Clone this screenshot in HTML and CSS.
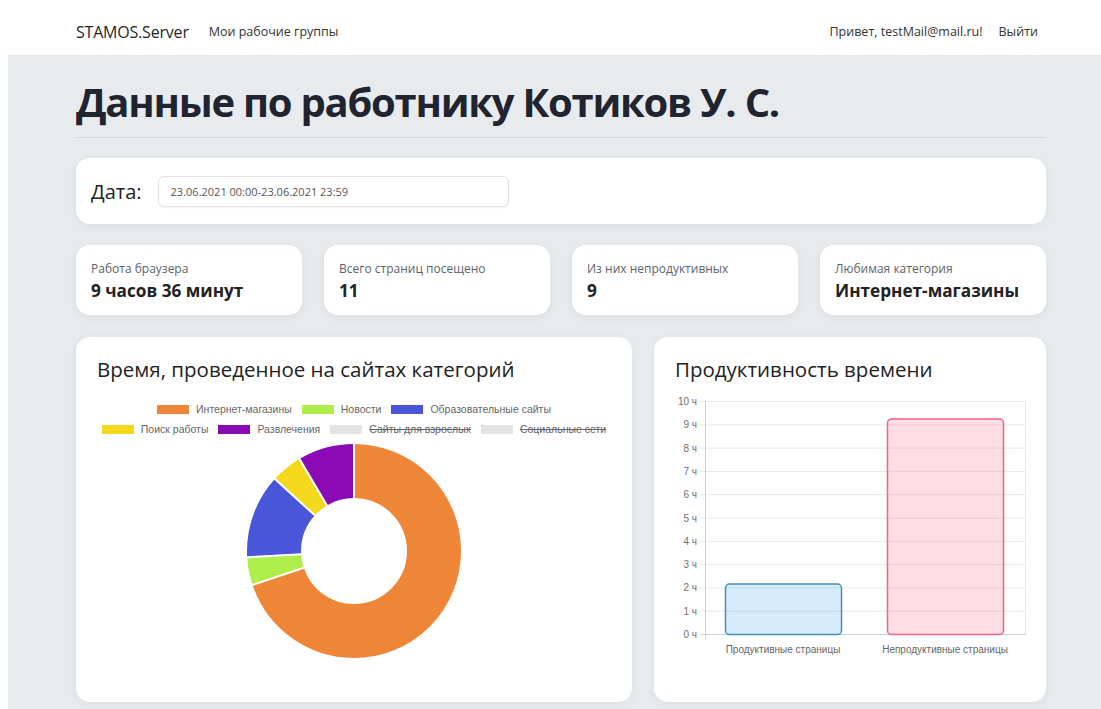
FILE: index.html
```html
<!DOCTYPE html>
<html lang="ru">
<head>
<meta charset="utf-8">
<title>STAMOS.Server — Данные по работнику</title>
<link rel="stylesheet" href="styles.css">
</head>
<body>
<nav class="topbar">
  <div class="topbar-inner">
    <a class="brand" href="#">STAMOS.Server</a>
    <a class="nav-link" href="#">Мои рабочие группы</a>
    <div class="spacer"></div>
    <span class="nav-text">Привет, testMail@mail.ru!</span>
    <a class="nav-link" href="#">Выйти</a>
  </div>
</nav>

<main class="page">
  <div class="container">
    <h1 class="title">Данные по работнику Котиков У. С.</h1>
    <hr class="divider">

    <section class="card date-card">
      <label class="date-label" for="range">Дата:</label>
      <input class="date-input" id="range" type="text" value="23.06.2021 00:00-23.06.2021 23:59">
    </section>

    <section class="stats">
      <div class="card stat">
        <div class="stat-label">Работа браузера</div>
        <div class="stat-value">9 часов 36 минут</div>
      </div>
      <div class="card stat">
        <div class="stat-label">Всего страниц посещено</div>
        <div class="stat-value">11</div>
      </div>
      <div class="card stat">
        <div class="stat-label">Из них непродуктивных</div>
        <div class="stat-value">9</div>
      </div>
      <div class="card stat">
        <div class="stat-label">Любимая категория</div>
        <div class="stat-value">Интернет-магазины</div>
      </div>
    </section>

    <section class="charts">
      <div class="card chart-card">
        <h2 class="chart-title">Время, проведенное на сайтах категорий</h2>
        <div class="legend">
          <div class="legend-row">
            <span class="legend-item"><i class="swatch sw-orange"></i>Интернет-магазины</span>
            <span class="legend-item"><i class="swatch sw-green"></i>Новости</span>
            <span class="legend-item"><i class="swatch sw-blue"></i>Образовательные сайты</span>
          </div>
          <div class="legend-row">
            <span class="legend-item"><i class="swatch sw-yellow"></i>Поиск работы</span>
            <span class="legend-item"><i class="swatch sw-purple"></i>Развлечения</span>
            <span class="legend-item off"><i class="swatch sw-off"></i>Сайты для взрослых</span>
            <span class="legend-item off"><i class="swatch sw-off"></i>Социальные сети</span>
          </div>
        </div>
        <div class="donut-wrap">
          <svg class="donut" width="216" height="216" viewBox="0 0 216 216">
            <g transform="translate(108 108) rotate(-90)" fill="none" stroke-width="54">
              <circle r="80" stroke="#ef8537" stroke-dasharray="351.16 502.65" stroke-dashoffset="0"/>
              <circle r="80" stroke="#aeee4a" stroke-dasharray="21.08 502.65" stroke-dashoffset="-351.16"/>
              <circle r="80" stroke="#4a56d9" stroke-dasharray="63.81 502.65" stroke-dashoffset="-372.24"/>
              <circle r="80" stroke="#f4d81c" stroke-dasharray="23.74 502.65" stroke-dashoffset="-436.05"/>
              <circle r="80" stroke="#8a0bb3" stroke-dasharray="42.86 502.65" stroke-dashoffset="-459.79"/>
            </g>
            <g transform="translate(108 108)" stroke="#fff" stroke-width="2">
              <line x1="0" y1="-53" x2="0" y2="-108"/>
              <line x1="-50.26" y1="16.82" x2="-102.4" y2="34.26"/>
              <line x1="-52.91" y1="3.14" x2="-107.8" y2="6.41"/>
              <line x1="-39.20" y1="-35.67" x2="-79.88" y2="-72.68"/>
              <line x1="-27.06" y1="-45.57" x2="-55.13" y2="-92.87"/>
            </g>
          </svg>
        </div>
      </div>

      <div class="card chart-card">
        <h2 class="chart-title">Продуктивность времени</h2>
        <svg class="bars" width="352" height="270" viewBox="0 0 352 270">
          <!-- horizontal grid, one line per hour -->
          <g stroke="#e8e8e8" stroke-width="1">
            <line x1="25" y1="8.5" x2="351" y2="8.5"/>
            <line x1="25" y1="31.8" x2="351" y2="31.8"/>
            <line x1="25" y1="55.1" x2="351" y2="55.1"/>
            <line x1="25" y1="78.4" x2="351" y2="78.4"/>
            <line x1="25" y1="101.7" x2="351" y2="101.7"/>
            <line x1="25" y1="125" x2="351" y2="125"/>
            <line x1="25" y1="148.3" x2="351" y2="148.3"/>
            <line x1="25" y1="171.6" x2="351" y2="171.6"/>
            <line x1="25" y1="194.9" x2="351" y2="194.9"/>
            <line x1="25" y1="218.2" x2="351" y2="218.2"/>
            <line x1="350.5" y1="8" x2="350.5" y2="241"/>
          </g>
          <g stroke="#cfcfcf" stroke-width="1">
            <line x1="30.5" y1="8" x2="30.5" y2="246"/>
            <line x1="25" y1="241.5" x2="351" y2="241.5"/>
          </g>
          <g class="tick" text-anchor="end">
            <text x="22" y="12">10 ч</text>
            <text x="22" y="35.3">9 ч</text>
            <text x="22" y="58.6">8 ч</text>
            <text x="22" y="81.9">7 ч</text>
            <text x="22" y="105.2">6 ч</text>
            <text x="22" y="128.5">5 ч</text>
            <text x="22" y="151.8">4 ч</text>
            <text x="22" y="175.1">3 ч</text>
            <text x="22" y="198.4">2 ч</text>
            <text x="22" y="221.7">1 ч</text>
            <text x="22" y="245">0 ч</text>
          </g>
          <rect x="50.5" y="191" width="116" height="50.5" rx="4" fill="rgba(54,162,235,0.2)" stroke="#3f8fbf" stroke-width="1.5"/>
          <rect x="212.5" y="26" width="116" height="215.5" rx="4" fill="rgba(255,99,132,0.22)" stroke="#f0628a" stroke-width="1.5"/>
          <g class="cat" text-anchor="middle">
            <text x="108" y="260">Продуктивные страницы</text>
            <text x="270" y="260">Непродуктивные страницы</text>
          </g>
        </svg>
      </div>
    </section>
  </div>
</main>
</body>
</html>
```

FILE: styles.css
```css
* { box-sizing: border-box; }

html, body {
  margin: 0;
  padding: 0;
  background: #ffffff;
  font-family: "Open Sans", "Noto Sans", Arial, sans-serif;
  color: #212529;
}

a { text-decoration: none; color: inherit; }

/* top navigation */
.topbar {
  height: 55px;
  background: #ffffff;
  padding-top: 8px;
}
.topbar-inner {
  height: 100%;
  margin-left: 76px;
  width: 962px;
  display: flex;
  align-items: center;
  gap: 20px;
}
.brand {
  font-size: 16px;
  color: #262626;
  letter-spacing: -0.2px;
}
.nav-link, .nav-text {
  font-size: 12.5px;
  color: #333;
}
.nav-text { margin-right: -4px; }
.spacer { flex: 1; }

/* page body */
.page {
  margin-left: 8px;
  background: #e8ebee;
  min-height: 654px;
  padding-bottom: 8px;
}
.container {
  margin-left: 68px;
  width: 970px;
  padding-top: 22px;
}
.title {
  margin: 0;
  font-size: 40px;
  font-weight: 700;
  line-height: 50px;
  color: #1f2430;
  letter-spacing: -1.25px;
}
.divider {
  margin: 10px 0 20px;
  border: 0;
  border-top: 1px solid #d4d7db;
}

.card {
  background: #ffffff;
  border-radius: 14px;
  box-shadow: 0 2px 8px rgba(40, 50, 70, 0.07);
}

/* date filter */
.date-card {
  height: 66px;
  display: flex;
  align-items: center;
  padding: 0 15px;
  gap: 16px;
}
.date-label {
  font-size: 20px;
  color: #222;
}
.date-input {
  width: 351px;
  height: 31px;
  border: 1px solid #dee2e6;
  border-radius: 6px;
  padding: 0 12px;
  font-family: "Open Sans", Arial, sans-serif;
  font-size: 11px;
  color: #555;
  box-shadow: 0 1px 2px rgba(0,0,0,0.05);
}

/* summary row */
.stats {
  margin-top: 21px;
  display: grid;
  grid-template-columns: repeat(4, 1fr);
  gap: 22px;
}
.stat {
  height: 70px;
  padding: 16px 15px 0;
}
.stat-label {
  font-size: 12px;
  color: #5d636a;
  line-height: 16px;
}
.stat-value {
  margin-top: 3px;
  font-size: 17.2px;
  font-weight: 700;
  color: #222;
  line-height: 22px;
}

/* charts */
.charts {
  margin-top: 22px;
  display: grid;
  grid-template-columns: 556px 392px;
  gap: 22px;
}
.chart-card {
  height: 365px;
  padding: 18px 21px 0;
}
.chart-title {
  margin: 0;
  font-size: 20.5px;
  font-weight: 400;
  line-height: 28px;
  color: #222;
}

.legend {
  margin-top: 18px;
  display: flex;
  flex-direction: column;
  align-items: center;
  gap: 4px;
  font-family: "Liberation Sans", Arial, sans-serif;
  font-size: 10.5px;
  color: #666;
}
.legend-row {
  display: flex;
  gap: 10px;
  line-height: 16px;
}
.legend-item {
  display: flex;
  align-items: center;
  gap: 7px;
}
.legend-item.off { text-decoration: line-through; }
.swatch {
  display: inline-block;
  width: 32px;
  height: 9px;
}
.sw-orange { background: #ef8537; }
.sw-green { background: #aeee4a; }
.sw-blue { background: #4a56d9; }
.sw-yellow { background: #f4d81c; }
.sw-purple { background: #8a0bb3; }
.sw-off { background: #e3e3e3; }

.donut-wrap {
  display: flex;
  justify-content: center;
  margin-top: 6px;
}
.donut { display: block; }

.bars {
  display: block;
  margin-top: 10px;
}
.bars .tick text {
  font-family: "Liberation Sans", Arial, sans-serif;
  font-size: 10px;
  fill: #6f6f6f;
}
.bars .cat text {
  font-family: "Liberation Sans", Arial, sans-serif;
  font-size: 10px;
  fill: #666;
}
```
